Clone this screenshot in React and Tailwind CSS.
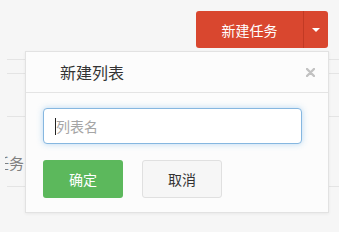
import React from "react";

export default function App() {
  const font = { fontFamily: '"Noto Sans CJK SC", "Noto Sans", sans-serif' };
  return (
    <div className="relative h-[232px] w-[339px] overflow-hidden bg-[#f6f6f6]" style={font}>
      <div className="flex justify-end pr-[11px] pt-[11px]">
        <div className="flex h-[37px] w-[132px] overflow-hidden rounded-[3px] bg-[#d9472f] text-white">
          <div className="flex flex-1 items-center justify-center text-[14px] leading-none">新建任务</div>
          <div className="flex w-[25px] items-center justify-center border-l border-[#c23a24]">
            <div className="h-0 w-0 border-x-[4px] border-t-[4px] border-x-transparent border-t-white" />
          </div>
        </div>
      </div>
      <div className="flex">
        <div className="w-[5px] shrink-0" />
        <div className="flex flex-1 flex-col overflow-hidden">
          <div className="ml-[2px] mt-[11px] flex flex-col">
            <div className="h-[15px] border-y border-[#e4e4e4]" />
            <div className="h-[43px] border-b border-[#e4e4e4]" />
            <div className="flex h-[70px] items-start border-b border-[#e4e4e4] pt-[36px]">
              <span className="-ml-[13px] whitespace-nowrap text-[15px] leading-[20px] text-[#808080]">任务</span>
            </div>
          </div>
        </div>
      </div>

      <div className="absolute left-[25px] top-[51px] flex h-[162px] w-[304px] flex-col border border-[#e2e2e2] bg-[#fcfcfc] shadow-[0_1px_3px_rgba(0,0,0,0.06)]">
        <div className="flex h-[41px] items-center justify-between border-b border-[#e4e4e4] pl-[34px] pr-[13px]">
          <span className="text-[16px] leading-none text-[#333]">新建列表</span>
          <svg width="9" height="9" viewBox="0 0 9 9" className="mt-[1px]">
            <path d="M1 1 L8 8 M8 1 L1 8" stroke="#c2c2c2" strokeWidth="2.4" strokeLinecap="round" />
          </svg>
        </div>
        <div className="flex flex-col pl-[17px] pt-[15px]">
          <div className="flex h-[36px] w-[259px] items-center rounded-[4px] border border-[#86b7e0] bg-white pl-[11px] shadow-[0_0_6px_rgba(102,175,233,0.45)]">
            <span className="h-[17px] w-px bg-[#222]" />
            <span className="text-[14px] leading-none text-[#a5a5a5]">列表名</span>
          </div>
          <div className="mt-[16px] flex gap-[19px]">
            <button className="flex h-[38px] w-[80px] items-center justify-center rounded-[3px] bg-[#5cb85c] text-[14px] text-white">确定</button>
            <button className="flex h-[38px] w-[80px] items-center justify-center rounded-[3px] border border-[#e0e0e0] bg-[#f6f6f6] text-[14px] text-[#333]">取消</button>
          </div>
        </div>
      </div>
    </div>
  );
}
